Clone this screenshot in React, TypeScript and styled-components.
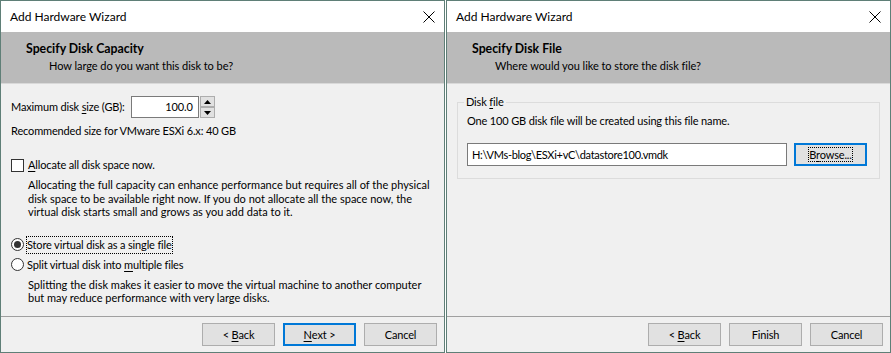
import React from 'react';
import styled, { createGlobalStyle } from 'styled-components';

/* Style Section */

const GlobalStyle = createGlobalStyle`
  body {
    margin: 0;
    background: #ffffff;
    font-family: Lato, "Liberation Sans", sans-serif;
    font-size: 11px;
    letter-spacing: -0.15px;
    color: #000000;
  }
`;

const Page = styled.div`
  display: flex;
  gap: 1px;
  width: 891px;
  height: 353px;
`;

const Window = styled.div`
  width: 445px;
  height: 353px;
  box-sizing: border-box;
  border: 1px solid #5f7f77;
  display: flex;
  flex-direction: column;
  background: #f0f0f0;
  overflow: hidden;
  & > * {
    flex-shrink: 0;
  }
`;

const TitleBar = styled.div`
  height: 31px;
  background: #ffffff;
  display: flex;
  align-items: center;
  justify-content: space-between;
  padding: 0 9px 0 9px;
  font-size: 12px;
  letter-spacing: 0;
`;

const Header = styled.div`
  height: 52px;
  background: #bababa;
  border-bottom: 1px solid #d9d9d9;
  padding: 8px 0 0 25px;
  box-sizing: border-box;
`;

const HeaderTitle = styled.div`
  font-weight: bold;
  font-size: 12.3px;
  letter-spacing: 0;
  line-height: 17px;
`;

const HeaderSub = styled.div`
  padding-left: 23px;
  line-height: 17px;
  letter-spacing: -0.05px;
`;

const Body = styled.div<{ $pad?: string }>`
  flex: 1 1 auto !important;
  padding: ${(p) => p.$pad || '12px 10px 0 10px'};
  display: flex;
  flex-direction: column;
`;

const Row = styled.div<{ $mt?: number }>`
  display: flex;
  align-items: center;
  margin-top: ${(p) => p.$mt || 0}px;
  line-height: 16px;
  white-space: pre;
`;

const SpinBox = styled.div`
  display: flex;
  margin-left: 6px;
`;

const SpinInput = styled.div`
  width: 68px;
  height: 22px;
  box-sizing: border-box;
  border: 1px solid #7a7a7a;
  background: #ffffff;
  text-align: right;
  padding-right: 5px;
  line-height: 20px;
`;

const SpinButtons = styled.div`
  display: flex;
  flex-direction: column;
  margin-left: 1px;
`;

const SpinButton = styled.div`
  width: 15px;
  height: 11px;
  box-sizing: border-box;
  border: 1px solid #adadad;
  background: #e1e1e1;
  display: flex;
  align-items: center;
  justify-content: center;
`;

const CheckBox = styled.div`
  width: 13px;
  height: 13px;
  box-sizing: border-box;
  border: 1px solid #333333;
  background: #ffffff;
  margin-right: 4px;
`;

const Radio = styled.div<{ $checked?: boolean }>`
  width: 13px;
  height: 13px;
  box-sizing: border-box;
  border: 1px solid #333333;
  border-radius: 50%;
  background: #ffffff;
  margin-right: 3px;
  display: flex;
  align-items: center;
  justify-content: center;
  &::after {
    content: '';
    display: ${(p) => (p.$checked ? 'block' : 'none')};
    width: 7px;
    height: 7px;
    border-radius: 50%;
    background: #333333;
  }
`;

const Focus = styled.span`
  outline: 1px dotted #000000;
  outline-offset: 0;
`;

const Para = styled.div<{ $mt?: number }>`
  padding-left: 17px;
  margin-top: ${(p) => p.$mt || 0}px;
  line-height: 13.5px;
  white-space: nowrap;
  letter-spacing: 0;
`;

const Footer = styled.div`
  height: 36px;
  box-sizing: border-box;
  border-top: 1px solid #a0a0a0;
  display: flex;
  justify-content: flex-end;
  align-items: flex-start;
  gap: 8px;
  padding: 6px 7px 0 0;
`;

const Button = styled.div<{ $default?: boolean; $w?: number }>`
  width: ${(p) => p.$w || 73}px;
  height: 23px;
  box-sizing: border-box;
  border: ${(p) => (p.$default ? '2px solid #0078d7' : '1px solid #adadad')};
  background: #e1e1e1;
  display: flex;
  align-items: center;
  justify-content: center;
  white-space: pre;
`;

const GroupBox = styled.fieldset`
  margin: 0;
  border: 1px solid #dcdcdc;
  padding: 5px 9px 12px 9px;
`;

const Legend = styled.legend`
  padding: 0 2px;
  margin-left: -3px;
  line-height: 14px;
`;

const FileRow = styled.div`
  display: flex;
  align-items: center;
  gap: 7px;
  margin-top: 16px;
`;

const TextField = styled.div`
  width: 320px;
  height: 23px;
  box-sizing: border-box;
  border: 1px solid #7a7a7a;
  background: #ffffff;
  padding-left: 4px;
  line-height: 21px;
  letter-spacing: -0.3px;
`;

const U = styled.span`
  text-decoration: underline;
  text-underline-offset: 2px;
`;

const Close = () => (
  <svg width="12" height="12" viewBox="0 0 12 12">
    <path d="M0.5 0.5 L11.5 11.5 M11.5 0.5 L0.5 11.5" stroke="#000" strokeWidth="1" />
  </svg>
);

const Arrow: React.FC<{ up?: boolean }> = ({ up }) => (
  <svg width="7" height="4" viewBox="0 0 7 4">
    <path d={up ? 'M0 4 L3.5 0 L7 4 Z' : 'M0 0 L3.5 4 L7 0 Z'} fill="#000" />
  </svg>
);

const Wizard: React.FC<{
  title: string;
  subtitle: string;
  children: React.ReactNode;
  finish?: boolean;
  pad?: string;
}> = ({ title, subtitle, children, finish, pad }) => (
  <Window>
    <TitleBar>
      <span>Add Hardware Wizard</span>
      <Close />
    </TitleBar>
    <Header>
      <HeaderTitle>{title}</HeaderTitle>
      <HeaderSub>{subtitle}</HeaderSub>
    </Header>
    <Body $pad={pad}>{children}</Body>
    <Footer>
      <Button>
        {'< '}
        <U>B</U>ack
      </Button>
      {finish ? (
        <Button>Finish</Button>
      ) : (
        <Button $default>
          <U>N</U>
          {'ext >'}
        </Button>
      )}
      <Button>Cancel</Button>
    </Footer>
  </Window>
);

const App: React.FC = () => (
  <>
    <GlobalStyle />
    <Page>
      <Wizard title="Specify Disk Capacity" subtitle="How large do you want this disk to be?">
        <Row>
          {'Maximum disk '}
          <U>s</U>
          {'ize (GB):'}
          <SpinBox>
            <SpinInput>100.0</SpinInput>
            <SpinButtons>
              <SpinButton>
                <Arrow up />
              </SpinButton>
              <SpinButton>
                <Arrow />
              </SpinButton>
            </SpinButtons>
          </SpinBox>
        </Row>
        <Row $mt={5}>Recommended size for VMware ESXi 6.x: 40 GB</Row>
        <Row $mt={18}>
          <CheckBox />
          <U>A</U>
          {'llocate all disk space now.'}
        </Row>
        <Para $mt={5}>
          Allocating the full capacity can enhance performance but requires all of the physical
          <br />
          disk space to be available right now. If you do not allocate all the space now, the
          <br />
          virtual disk starts small and grows as you add data to it.
        </Para>
        <Row $mt={18}>
          <Radio $checked />
          <Focus>Store virtual disk as a single file</Focus>
        </Row>
        <Row $mt={4}>
          <Radio />
          {'Split virtual disk into '}
          <U>m</U>
          {'ultiple files'}
        </Row>
        <Para $mt={5}>
          Splitting the disk makes it easier to move the virtual machine to another computer
          <br />
          but may reduce performance with very large disks.
        </Para>
      </Wizard>
      <Wizard
        title="Specify Disk File"
        subtitle="Where would you like to store the disk file?"
        finish
        pad="11px 10px 0 10px"
      >
        <GroupBox>
          <Legend>
            {'Disk '}
            <U>f</U>
            {'ile'}
          </Legend>
          <div>One 100 GB disk file will be created using this file name.</div>
          <FileRow>
            <TextField>H:\VMs-blog\ESXi+vC\datastore100.vmdk</TextField>
            <Button $default $w={73}>
              <Focus>
                B<U>r</U>
                {'owse...'}
              </Focus>
            </Button>
          </FileRow>
        </GroupBox>
      </Wizard>
    </Page>
  </>
);

export default App;
